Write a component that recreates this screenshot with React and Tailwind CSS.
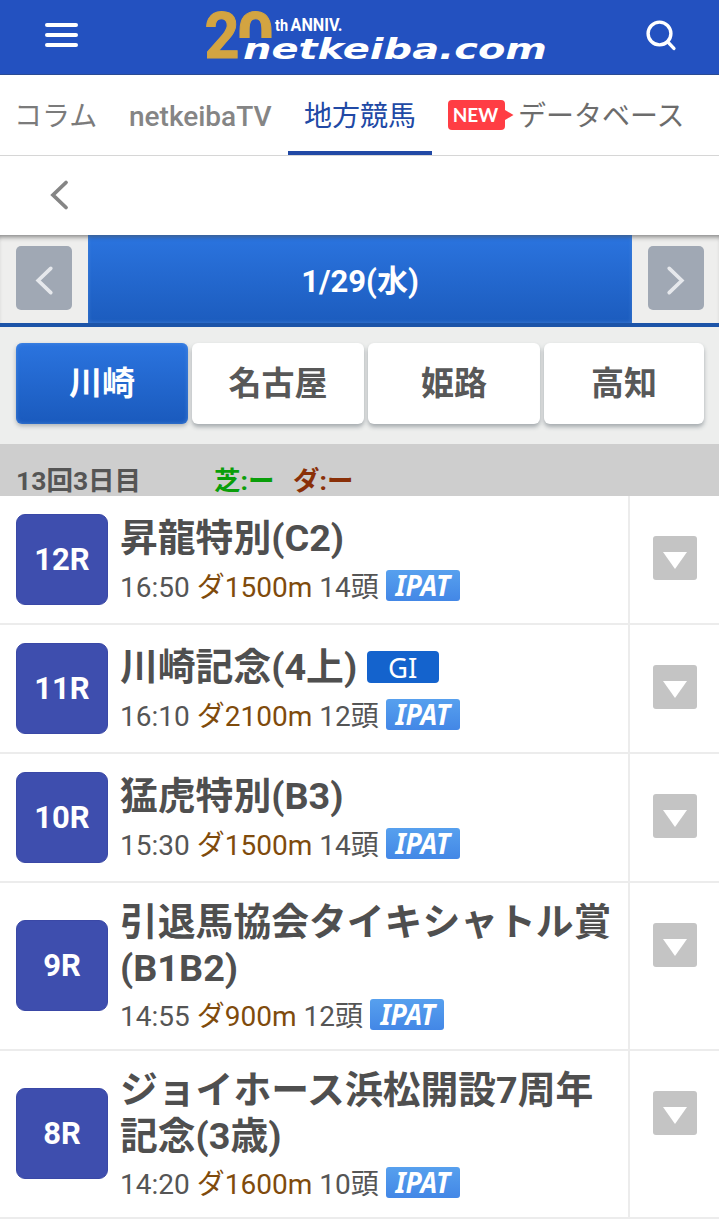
const VENUES = [
    { name: '川崎', width: 'w-[172px]', active: true },
    { name: '名古屋', width: 'w-[172px]' },
    { name: '姫路', width: 'w-[172px]' },
    { name: '高知', width: 'w-[160px]' }
];

const RACES = [
    { no: '12R', title: ['昇龍特別(C2)'], time: '16:50', course: 'ダ1500m', heads: '14頭' },
    { no: '11R', title: ['川崎記念(4上)'], grade: 'GI', time: '16:10', course: 'ダ2100m', heads: '12頭' },
    { no: '10R', title: ['猛虎特別(B3)'], time: '15:30', course: 'ダ1500m', heads: '14頭' },
    { no: '9R', title: ['引退馬協会タイキシャトル賞', '(B1B2)'], time: '14:55', course: 'ダ900m', heads: '12頭' },
    { no: '8R', title: ['ジョイホース浜松開設7周年', '記念(3歳)'], time: '14:20', course: 'ダ1600m', heads: '10頭' }
];

function Logo() {
    return (
        <svg width="348" height="62" viewBox="0 0 348 62" className="block">
            <defs>
                <clipPath id="arch">
                    <rect x="34" y="0" width="38" height="32" />
                </clipPath>
            </defs>
            <g fill="#d3a441" stroke="#d3a441" strokeWidth="1" fontFamily="Roboto, sans-serif" fontWeight="700" fontSize="65">
                <text x="-0.5" y="52" textLength="35" lengthAdjust="spacingAndGlyphs">2</text>
                <text x="32" y="52" textLength="37" lengthAdjust="spacingAndGlyphs" clipPath="url(#arch)">0</text>
            </g>
            <text x="70" y="25" textLength="13" lengthAdjust="spacingAndGlyphs" fill="#fff" fontFamily="Roboto, sans-serif" fontWeight="700" fontSize="16.5">
                th
            </text>
            <text x="85.5" y="25" textLength="52" lengthAdjust="spacingAndGlyphs" fill="#fff" fontFamily="Roboto, sans-serif" fontWeight="700" fontSize="17.5">
                ANNIV.
            </text>
            <text
                x="38"
                y="53"
                textLength="304"
                lengthAdjust="spacingAndGlyphs"
                fill="#fff"
                fontFamily="'DejaVu Sans', sans-serif"
                fontWeight="700"
                fontStyle="italic"
                fontSize="28"
            >
                netkeiba.com
            </text>
        </svg>
    );
}

function Header() {
    return (
        <header className="flex h-[75px] items-start justify-between border-b border-[#2a4b93] bg-[#2351c0] pl-[45px] pr-[42px]">
            <button type="button" className="mt-[23px] flex flex-col gap-[6px]">
                <span className="h-[4px] w-[33px] rounded-full bg-white" />
                <span className="h-[4px] w-[33px] rounded-full bg-white" />
                <span className="h-[4px] w-[33px] rounded-full bg-white" />
            </button>
            <div className="ml-[34px] mt-[6px]">
                <Logo />
            </div>
            <button type="button" className="mt-[20px]">
                <svg width="32" height="32" viewBox="0 0 32 32" fill="none" stroke="#fff" strokeWidth="3.4" strokeLinecap="round">
                    <circle cx="14.5" cy="13.5" r="11.4" />
                    <path d="M22.7 21.8 L28.9 28.4" />
                </svg>
            </button>
        </header>
    );
}

function CategoryNav() {
    return (
        <nav className="flex h-[81px] overflow-hidden whitespace-nowrap border-b border-[#d6d6d6] bg-white text-[28px] leading-[84px] text-[#7b7b7b]">
            <a className="w-[112px] shrink-0 pl-[14px]">コラム</a>
            <a className="w-[176px] shrink-0 pl-[17px] font-medium text-[#858585]">netkeibaTV</a>
            <a className="h-[80px] w-[144px] shrink-0 border-b-4 border-[#2149a5] text-center text-[#2149a5]">地方競馬</a>
            <a className="flex shrink-0 items-start pl-[16px] text-[#6c6c6c]">
                <span className="mt-[25px] h-[30px] w-[57px] rounded-[4px] bg-[#ff3d44] pr-[2px] text-center font-[Lato] text-[19px] font-bold leading-[30px] text-white">
                    NEW
                </span>
                <svg width="9" height="10" viewBox="0 0 9 10" className="mr-[4px] mt-[35px]">
                    <path d="M0 0 L8.5 5 L0 10 Z" fill="#ff3d44" />
                </svg>
                データベース
            </a>
        </nav>
    );
}

function Chevron({ dir = 'left', color, className }) {
    return (
        <svg width="20" height="32" viewBox="0 0 20 32" fill="none" stroke={color} strokeWidth="3.8" strokeLinecap="round" className={className}>
            <path d={dir === 'left' ? 'M17 3.5 L4 16 L17 28.5' : 'M3 3.5 L16 16 L3 28.5'} />
        </svg>
    );
}

function DateBar() {
    return (
        <div className="flex h-[92px] items-start border-b-4 border-[#1c54a8] bg-[#eeeeed] px-4 shadow-[inset_0_5px_5px_-3px_rgba(0,0,0,0.45)]">
            <button type="button" className="mr-4 mt-[11px] flex h-[64px] w-[56px] shrink-0 items-center justify-center rounded-[5px] bg-[#a0a8b4]">
                <Chevron color="#e6e8ec" className="mt-[5px] h-[31px]" />
            </button>
            <div className="h-[88px] w-[544px] shrink-0 bg-linear-to-b from-[#2b74df] to-[#1c5cbe] text-center text-[31px] font-bold leading-[93px] text-white shadow-[inset_0_5px_4px_-3px_rgba(60,90,130,0.9),inset_0_0_4px_rgba(90,150,230,0.6)]">
                1/29(水)
            </div>
            <button type="button" className="ml-4 mt-[11px] flex h-[64px] w-[56px] shrink-0 items-center justify-center rounded-[5px] bg-[#a0a8b4]">
                <Chevron dir="right" color="#e6e8ec" className="mt-[5px] h-[31px]" />
            </button>
        </div>
    );
}

function VenueTabs() {
    return (
        <div className="flex h-[117px] gap-1 bg-[#edeeed] px-4 pt-4">
            {VENUES.map(({ name, width, active }) => (
                <button
                    key={name}
                    type="button"
                    className={`h-[81px] shrink-0 rounded-[6px] text-center text-[33px] font-bold leading-[76px] ${width} ${
                        active
                            ? 'bg-linear-to-b from-[#2b74df] to-[#1a5abd] text-white shadow-[inset_0_0_4px_rgba(90,150,230,0.7),0_2px_4px_rgba(80,90,100,0.4)]'
                            : 'bg-white text-[#585858] shadow-[0_3px_4px_rgba(80,90,100,0.45)]'
                    }`}
                >
                    {name}
                </button>
            ))}
        </div>
    );
}

function RaceRow({ race }) {
    const isLong = race.title.length > 1;

    return (
        <li className={`flex border-b-2 border-[#ececec] bg-white ${isLong ? 'h-[168px]' : 'h-[129px]'}`}>
            <div className="flex w-[628px] items-start pl-4">
                <div className="flex shrink-0 self-center">
                    <span className="mb-px h-[91px] w-[92px] rounded-[9px] border border-[#3a48a6] bg-[#3e4eae] text-center text-[31px] font-bold leading-[90px] text-white">
                        {race.no}
                    </span>
                </div>
                <div className={`pl-[12px] ${isLong ? 'pt-[16px]' : 'pt-[19px]'}`}>
                    <h2 className="whitespace-nowrap text-[37.8px] font-bold leading-[46px] text-[#4f4f4f]">
                        {race.title.map((line) => (
                            <span key={line} className="block">
                                {line}
                                {race.grade && (
                                    <span className="ml-[9.5px] inline-block h-[32px] w-[72px] rounded-[4px] bg-[#1463cd] text-center align-[2px] font-['Noto_Sans'] text-[27.5px] font-normal leading-[34px] text-white">
                                        {race.grade}
                                    </span>
                                )}
                            </span>
                        ))}
                    </h2>
                    <p className={`flex items-center whitespace-nowrap text-[28px] leading-[40px] text-[#555] ${isLong ? 'mt-[6px]' : 'mt-[7px]'}`}>
                        <span>{race.time}</span>
                        <span className="ml-[7px] text-[#7f4b0c]">{race.course}</span>
                        <span className="ml-[7px]">{race.heads}</span>
                        <span className="mb-[5px] ml-[7.5px] h-[31px] w-[74px] rounded-[3px] bg-linear-to-b from-[#57a0ee] to-[#4387e6] text-center font-['Noto_Sans'] text-[28px] font-bold italic leading-[30px] text-white">
                            <span className="inline-block scale-x-[0.95]">IPAT</span>
                        </span>
                    </p>
                </div>
            </div>
            <div className="flex flex-1 items-start border-l-2 border-[#ececec] pl-[23px] pt-[40px]">
                <button type="button" className="flex h-[44px] w-[44px] justify-center rounded-[3px] bg-[#c4c4c4] pt-4">
                    <svg width="24" height="17" viewBox="0 0 24 17">
                        <path d="M0 0 H24 L12 17 Z" fill="#fff" />
                    </svg>
                </button>
            </div>
        </li>
    );
}

function App() {
    return (
        <div className="h-[1227px] w-[719px] overflow-hidden bg-white font-[Roboto,'Noto_Sans_CJK_JP',sans-serif]">
            <Header />
            <CategoryNav />
            <div className="h-[79px] bg-white pl-[49px] pt-[23px]">
                <Chevron color="#858585" />
            </div>
            <DateBar />
            <VenueTabs />
            <div className="flex h-[52px] overflow-hidden bg-[#cecece] pl-4 text-[26.5px] font-bold leading-[73px] text-[#555]">
                <span className="w-[198px]">13回3日目</span>
                <span className="w-[79px] text-[#0a9e0a]">芝:ー</span>
                <span className="text-[#8a3008]">ダ:ー</span>
            </div>
            <ul>
                {RACES.map((race) => (
                    <RaceRow key={race.no} race={race} />
                ))}
            </ul>
        </div>
    );
}

export default App;
